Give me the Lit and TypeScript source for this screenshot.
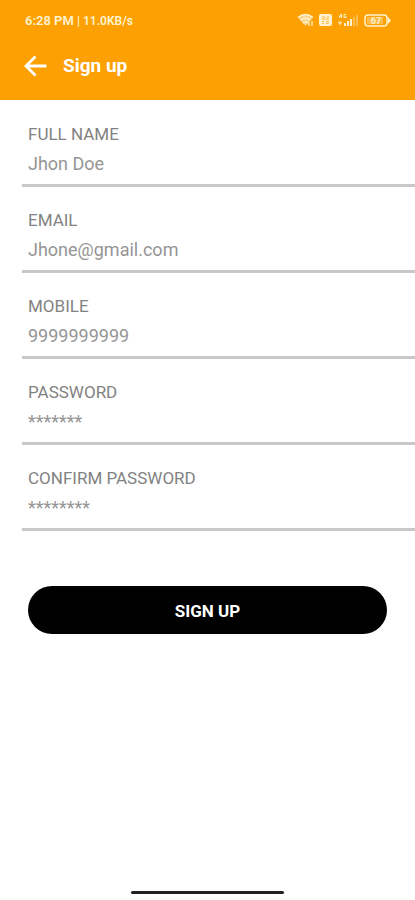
import { LitElement, html, css, svg } from "lit";
import { customElement } from "lit/decorators.js";

interface Field {
  id: string;
  label: string;
  type: string;
  placeholder: string;
}

const fields: Field[] = [
  { id: "name", label: "FULL NAME", type: "text", placeholder: "Jhon Doe" },
  { id: "email", label: "EMAIL", type: "email", placeholder: "Jhone@gmail.com" },
  { id: "mobile", label: "MOBILE", type: "tel", placeholder: "9999999999" },
  { id: "password", label: "PASSWORD", type: "password", placeholder: "*******" },
  { id: "confirm", label: "CONFIRM PASSWORD", type: "password", placeholder: "********" },
];

const wifi = svg`
  <path d="M1 4.5Q8.500 -1.500 16 4.500L8.500 13Z" fill="#fff" fill-opacity=".55"/>
  <path d="M1 4.500Q8.500 -1.500 16 4.500M3.500 7.200Q8.500 3.200 13.500 7.200M6 10Q8.500 8 11 10" fill="none" stroke="#fff3cf" stroke-width="1.500"/>
  <path d="M12 13V9M15 13V8" stroke="#fff3cf" stroke-width="1.200"/>`;

@customElement("app-root")
export class AppRoot extends LitElement {
  static styles = css`
    :host {
      display: flex;
      flex-direction: column;
      min-height: 100vh;
      background: #fff;
      font-family: Roboto, "Liberation Sans", sans-serif;
    }
    header {
      background: #fda003;
      color: #fff;
      height: 100px;
    }
    .status {
      display: flex;
      align-items: center;
      justify-content: space-between;
      height: 40px;
      padding: 0 24px 0 25px;
      color: #fff3cf;
      font-size: 13px;
      font-weight: 600;
    }
    .speed {
      font-size: 12px;
    }
    .icons {
      display: flex;
      align-items: center;
      gap: 5px;
    }
    .icons svg,
    .back svg {
      display: block;
    }
    .bar {
      display: flex;
      align-items: center;
      gap: 16px;
      height: 52px;
      padding: 0 24px;
    }
    .back {
      padding: 0;
      border: 0;
      background: none;
      color: inherit;
    }
    h1 {
      margin: 0;
      font-size: 19px;
      line-height: 24px;
      font-weight: 700;
    }
    form {
      padding-top: 1px;
    }
    .field {
      display: flex;
      flex-direction: column;
      margin-left: 22px;
      padding: 23px 0 1px 6px;
      border-bottom: 3px solid #c8c8c8;
    }
    label {
      color: #828282;
      font-size: 17px;
      line-height: 20px;
      font-weight: 400;
    }
    input {
      box-sizing: border-box;
      width: 100%;
      height: 39px;
      padding: 0;
      border: 0;
      outline: 0;
      background: none;
      color: #444;
      font: 400 18px/24px Roboto, "Liberation Sans", sans-serif;
    }
    input::placeholder {
      color: #959595;
      opacity: 1;
    }
    .submit {
      display: block;
      width: calc(100% - 56px);
      height: 48px;
      margin: 55px 28px 0;
      padding: 2px 0 0;
      border: 0;
      border-radius: 24px;
      background: #000;
      color: #fff;
      font: 700 17px/24px Roboto, "Liberation Sans", sans-serif;
    }
    .handle {
      width: 153px;
      height: 3px;
      margin: auto auto 6px;
      border-radius: 2px;
      background: #222;
    }
  `;

  render() {
    return html`
      <header>
        <div class="status">
          <span>6:28 PM <span class="speed">| 11.0KB/s</span></span>
          <div class="icons">
            <svg width="17" height="14" viewBox="0 0 17 14">${wifi}</svg>
            <svg width="13" height="12" viewBox="0 0 13 12">
              <rect width="13" height="12" rx="2" fill="#fff3cf" />
              <path d="M3 3H6M8 3H10M3 5H10M3 7.500H5M7 7.500H10M3 9.500H5M7 9.500H10" stroke="#fda003" stroke-width="1" opacity=".7" />
            </svg>
            <svg width="22" height="14" viewBox="0 0 22 14">
              <path d="M4 1L2 4H5M4.500 1V5M9 1.500H7V4.500H9V3M1 9L3 11L5 9M3 8V12" fill="none" stroke="#fff3cf" />
              <path d="M8 13V10M11 13V8M14 13V6" stroke="#fff3cf" stroke-width="2" />
              <path d="M17 13V4M20 13V2" stroke="#fff3cf" stroke-width="2" opacity=".35" />
            </svg>
            <svg width="27" height="13" viewBox="0 0 27 13">
              <rect x="1" y="1" width="22" height="11" rx="3" fill="none" stroke="#fff3cf" stroke-width="1.500" />
              <path d="M24 3L27 6.500L24 10Z" fill="#fff3cf" />
              <rect x="3" y="3" width="16" height="7" rx="1" fill="#fff3cf" opacity=".35" />
              <text x="12" y="10" text-anchor="middle" font-size="9" font-weight="700" fill="#fff3cf">67</text>
            </svg>
          </div>
        </div>
        <div class="bar">
          <button class="back" aria-label="Back">
            <svg width="23" height="22" viewBox="0 0 23 22" fill="none" stroke="#fff" stroke-width="2.800">
              <path d="M22.500 11H2.500M11.500 1.500L2 11L11.500 20.500" />
            </svg>
          </button>
          <h1>Sign up</h1>
        </div>
      </header>
      <form @submit=${(e: Event) => e.preventDefault()}>
        ${fields.map(
          (f) => html`
            <div class="field">
              <label for=${f.id}>${f.label}</label>
              <input id=${f.id} type=${f.type} placeholder=${f.placeholder} />
            </div>
          `
        )}
        <button class="submit">SIGN UP</button>
      </form>
      <div class="handle"></div>
    `;
  }
}
